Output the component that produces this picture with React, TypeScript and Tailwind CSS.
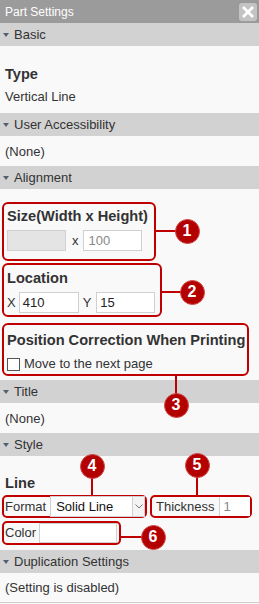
import React from "react";

const font = { fontFamily: '"Liberation Sans", Arial, sans-serif' };

function Header({ label }: { label: string }) {
  return (
    <div className="h-[23px] bg-[#d2d2d2] flex items-center text-[13px] text-[#333]">
      <span className="ml-[3px] mr-[5px] w-0 h-0 border-l-[3.5px] border-r-[3.5px] border-t-[4px] border-l-transparent border-r-transparent border-t-[#556070]" />
      <span>{label}</span>
    </div>
  );
}

function Badge({ n, x, y }: { n: number; x: number; y: number }) {
  return (
    <div
      className="absolute w-[25px] h-[25px] rounded-full bg-[#b30000] border border-[#d24a4a] flex items-center justify-center text-white font-bold text-[16px] leading-none"
      style={{ left: x - 12.5, top: y - 12.5 }}
    >
      {n}
    </div>
  );
}

function HLine({ x1, x2, y }: { x1: number; x2: number; y: number }) {
  return <div className="absolute h-[2px] bg-[#c00000]" style={{ left: x1, width: x2 - x1, top: y - 1 }} />;
}
function VLine({ x, y1, y2 }: { x: number; y1: number; y2: number }) {
  return <div className="absolute w-[2px] bg-[#c00000]" style={{ left: x - 1, top: y1, height: y2 - y1 }} />;
}

export default function App() {
  return (
    <div className="relative w-[259px] h-[604px] bg-[#f9f9f9] text-[#333] overflow-hidden" style={font}>
      {/* Title bar */}
      <div className="h-[23px] bg-[#9b9b9b] flex items-center justify-between pl-[5px] pr-[2px]">
        <span className="text-white text-[12px]">Part Settings</span>
        <div className="w-[18px] h-[18px] rounded-[3px] bg-[#c3c3c3] flex items-center justify-center">
          <svg width="12" height="12" viewBox="0 0 12 12">
            <path d="M2 2 L10 10 M10 2 L2 10" stroke="white" strokeWidth="2.8" strokeLinecap="square" />
          </svg>
        </div>
      </div>

      <Header label="Basic" />
      <div className="h-[67px] pl-[5px] pt-[19px]">
        <div className="font-bold text-[14.6px] leading-[18px]">Type</div>
        <div className="text-[13px] leading-[18px] mt-[5px]">Vertical Line</div>
      </div>

      <Header label="User Accessibility" />
      <div className="h-[30px] pl-[5px] flex items-center text-[13px] pt-[1px]">(None)</div>

      <Header label="Alignment" />
      <div className="h-[191px] pl-[2px] pt-[13px]">
        {/* Box 1 */}
        <div className="w-[154px] h-[59px] border-2 border-[#c00000] rounded-[6px] pl-[2px] pt-[3px]">
          <div className="font-bold text-[14.6px] leading-[18px] pl-[1px]">Size(Width x Height)</div>
          <div className="mt-[5px] flex items-center h-[21px]">
            <div className="ml-[1px] w-[59px] h-[21px] bg-[#e4e4e4] border border-[#d0d0d0]" />
            <span className="ml-[6px] text-[13px]">x</span>
            <div className="ml-[4px] w-[59px] h-[21px] bg-white border border-[#d0d0d0] text-[13px] text-[#888] pl-[5px] leading-[19px]">100</div>
          </div>
        </div>
        {/* Box 2 */}
        <div className="mt-[2px] w-[160px] h-[54px] border-2 border-[#c00000] rounded-[6px] pl-[2px] pt-[4px]">
          <div className="font-bold text-[14.6px] leading-[18px] pl-[1px]">Location</div>
          <div className="mt-[5px] flex items-center h-[21px] text-[13px]">
            <span className="ml-[1px]">X</span>
            <div className="ml-[3px] w-[60px] h-[21px] bg-white border border-[#d0d0d0] pl-[3px] leading-[19px] text-[#222]">410</div>
            <span className="ml-[4px]">Y</span>
            <div className="ml-[5px] w-[59px] h-[21px] bg-white border border-[#d0d0d0] pl-[3px] leading-[19px] text-[#222]">15</div>
          </div>
        </div>
        {/* Box 3 */}
        <div className="mt-[6px] w-[247px] h-[53px] border-2 border-[#c00000] rounded-[6px] pl-[2px] pt-[6px]">
          <div className="font-bold text-[14.6px] leading-[18px] pl-[1px]">Position Correction When Printing</div>
          <div className="mt-[7px] flex items-center h-[16px] text-[13px]">
            <div className="ml-[1px] w-[13px] h-[13px] bg-white border border-[#555]" />
            <span className="ml-[4px]">Move to the next page</span>
          </div>
        </div>
      </div>

      <Header label="Title" />
      <div className="h-[30px] pl-[5px] flex items-center text-[13px] pt-[1px]">(None)</div>

      <Header label="Style" />
      <div className="h-[94px] pl-[2px] pt-[18px]">
        <div className="font-bold text-[14.6px] leading-[18px] pl-[3px]">Line</div>
        <div className="mt-[3px] flex">
          {/* Box 4 */}
          <div className="w-[145px] h-[23px] border-2 border-[#c00000] rounded-[5px] flex items-center text-[13px]">
            <span className="ml-[1px]">Format</span>
            <div className="ml-[4px] w-[95px] h-[21px] bg-white border border-[#d0d0d0] flex items-center">
              <span className="flex-1 pl-[5px] text-[13px] text-[#111]">Solid Line</span>
              <div className="w-[12px] h-full border-l border-[#d0d0d0] bg-[#f4f4f4] flex items-center justify-center">
                <svg width="8" height="5" viewBox="0 0 8 5">
                  <path d="M0.5 0.5 L4 4 L7.5 0.5" stroke="#777" strokeWidth="1" fill="none" />
                </svg>
              </div>
            </div>
          </div>
          {/* Box 5 */}
          <div className="ml-[3px] w-[102px] h-[23px] border-2 border-[#c00000] rounded-[5px] flex items-center text-[13px]">
            <span className="ml-[4px]">Thickness</span>
            <div className="ml-[4px] w-[32px] h-[19px] bg-white border-l border-[#d0d0d0] pl-[4px] leading-[19px] text-[#888]">1</div>
          </div>
        </div>
        {/* Box 6 */}
        <div className="mt-[3px] w-[119px] h-[24px] border-2 border-[#c00000] rounded-[5px] flex items-center text-[13px]">
          <span className="ml-[1px]">Color</span>
          <div className="ml-[3px] w-[78px] h-[20px] bg-white border border-[#d0d0d0]" />
        </div>
      </div>

      <Header label="Duplication Settings" />
      <div className="h-[30px] pl-[5px] flex items-center text-[13px] border-b border-[#cfcfcf]">(Setting is disabled)</div>

      {/* annotations */}
      <HLine x1={156} x2={178} y={231} />
      <Badge n={1} x={187} y={231} />
      <HLine x1={162} x2={183} y={292} />
      <Badge n={2} x={192} y={292} />
      <VLine x={176} y1={376} y2={396} />
      <Badge n={3} x={176} y={405} />
      <VLine x={92} y1={476} y2={495} />
      <Badge n={4} x={92} y={466} />
      <VLine x={197} y1={475} y2={495} />
      <Badge n={5} x={197} y={465} />
      <HLine x1={121} x2={144} y={537} />
      <Badge n={6} x={153} y={537} />
    </div>
  );
}
